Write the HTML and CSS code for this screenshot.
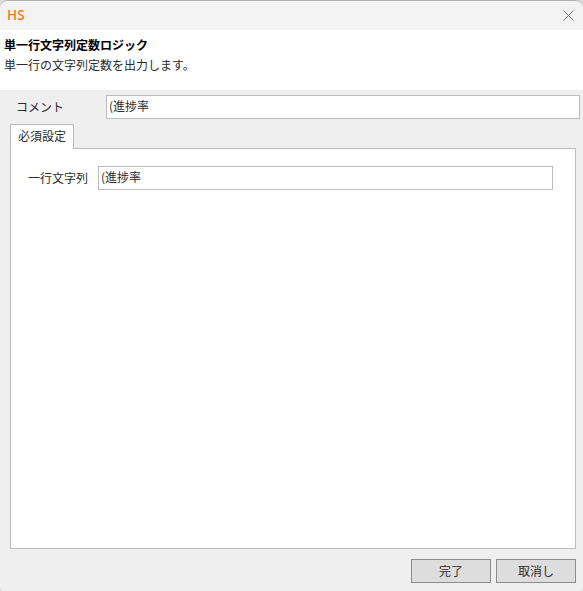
FILE: index.html
```
<!DOCTYPE html>
<html lang="ja">
<head>
<meta charset="utf-8">
<title>HS</title>
<link rel="stylesheet" href="styles.css">
</head>
<body>
<div class="dialog">
  <header class="titlebar">
    <span class="logo">HS</span>
    <svg class="close" width="11" height="11" viewBox="0 0 11 11"><path d="M.5 .5L10.5 10.5M10.5 .5L.5 10.5"/></svg>
  </header>
  <section class="intro">
    <h1>単一行文字列定数ロジック</h1>
    <p>単一行の文字列定数を出力します。</p>
  </section>
  <main class="content">
    <label class="comment"><span>コメント</span><input type="text" value="(進捗率"></label>
    <div class="tab">必須設定</div>
    <div class="panel">
      <label class="field"><span>一行文字列</span><input type="text" value="(進捗率"></label>
    </div>
    <footer class="actions">
      <button>完了</button>
      <button>取消し</button>
    </footer>
  </main>
</div>
</body>
</html>
```
FILE: styles.css
```
* { box-sizing: border-box; }
body {
  margin: 0;
  background: #dcdcdc;
  font: 12px/18px "Noto Sans CJK JP", sans-serif;
  color: #2b2b2b;
}
.dialog {
  display: flex;
  flex-direction: column;
  width: 583px;
  height: 591px;
  border-top: 1px solid #b4b4b4;
  border-radius: 8px 8px 4px 4px;
  background: #efefef;
  overflow: hidden;
}
.titlebar {
  display: flex;
  justify-content: space-between;
  align-items: center;
  height: 29px;
  padding: 0 9px 0 7px;
  background: #f3f3f3;
}
.logo {
  padding-bottom: 2px;
  font: 600 13.5px/18px "Open Sans", sans-serif;
  color: #fa7a14;
}
.close { fill: none; stroke: #747474; stroke-width: 1; }
.intro {
  height: 60px;
  padding: 6px 4px 0;
  background: #fff;
}
h1, p { margin: 0; font-size: 12px; line-height: 18px; }
h1 { font-weight: bold; color: #000; }
p { margin-top: 2px; }
.content {
  display: flex;
  flex: 1;
  flex-direction: column;
  padding: 5px 7px 8px 10px;
}
.comment, .field { display: flex; align-items: center; }
.comment { width: 570px; height: 24px; padding-left: 6px; }
.comment span { width: 90px; padding-bottom: 1px; }
input {
  flex: 1;
  min-width: 0;
  height: 24px;
  margin: 0;
  padding: 0 2px 3px;
  border: 1px solid #bcbcbc;
  border-radius: 0;
  background: #fff;
  font: inherit;
  color: inherit;
}
.tab {
  z-index: 1;
  width: 64px;
  height: 25px;
  margin: 5px 0 -1px;
  padding: 2px 0 0 7px;
  border: 1px solid #bcbcbc;
  border-bottom: 0;
  background: #fff;
}
.panel {
  width: 566px;
  height: 401px;
  padding: 17px 22px 0 17px;
  border: 1px solid #bcbcbc;
  background: #fff;
}
.field span { width: 70px; }
.actions {
  display: flex;
  justify-content: flex-end;
  gap: 5px;
  margin-top: 10px;
}
button {
  width: 80px;
  height: 24px;
  padding: 0 0 1px;
  border: 1px solid #8c8c8c;
  border-radius: 0;
  background: #dddddd;
  font: inherit;
  line-height: 20px;
  color: inherit;
}
```
